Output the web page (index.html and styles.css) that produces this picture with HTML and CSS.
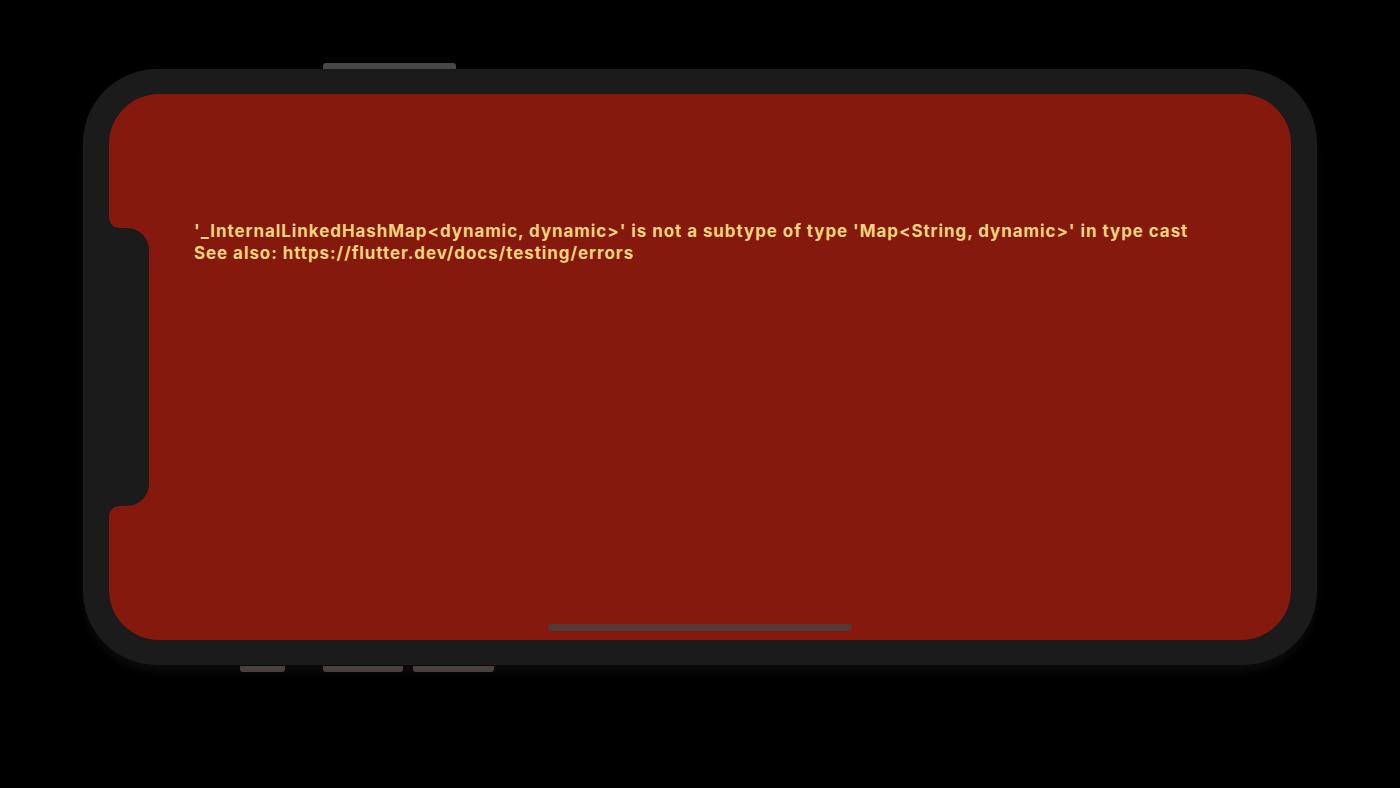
FILE: index.html
```html
<!DOCTYPE html>
<html>
<head>
<meta charset="utf-8">
<link rel="stylesheet" href="styles.css">
</head>
<body>
<div class="stage">
  <div class="phone">
    <span class="btn btn-top"></span>
    <span class="btn btn-b1"></span>
    <span class="btn btn-b2"></span>
    <span class="btn btn-b3"></span>
    <div class="screen">
      <div class="notch"></div>
      <div class="error">
        <p>'_InternalLinkedHashMap&lt;dynamic, dynamic&gt;' is not a subtype of type 'Map&lt;String, dynamic&gt;' in type cast</p>
        <p>See also: https://flutter.dev/docs/testing/errors</p>
      </div>
      <div class="home-indicator"></div>
    </div>
  </div>
</div>
</body>
</html>
```
FILE: styles.css
```css
html, body {
  margin: 0;
  padding: 0;
  background: #000;
  width: 1400px;
  height: 788px;
  overflow: hidden;
}

.stage {
  display: flex;
  justify-content: center;
  padding-top: 69px;
}

.phone {
  position: relative;
  width: 1234px;
  height: 596px;
  box-sizing: border-box;
  padding: 25px 26px 25px 26px;
  background: #1b1b1b;
  border-radius: 74px;
  box-shadow: 0 8px 10px -2px rgba(14, 14, 14, 0.95);
}

.btn {
  position: absolute;
  height: 6px;
  background: #4a4040;
  border-radius: 2px;
}
.btn-top {
  left: 240px;
  top: -6px;
  width: 133px;
  background: #474747;
  border-radius: 3px 3px 0 0;
}
.btn-b1 { left: 157px; bottom: -7px; width: 45px; border-radius: 0 0 3px 3px; }
.btn-b2 { left: 240px; bottom: -7px; width: 80px; border-radius: 0 0 3px 3px; }
.btn-b3 { left: 330px; bottom: -7px; width: 81px; border-radius: 0 0 3px 3px; }

.screen {
  position: relative;
  height: 100%;
  background: #86190e;
  border-radius: 50px;
  box-sizing: border-box;
  padding: 126px 40px 0 85px;
}

.notch {
  position: absolute;
  left: 0;
  top: 134px;
  width: 40px;
  height: 278px;
  background: #1b1b1b;
  border-radius: 0 22px 22px 0;
}
.notch::before,
.notch::after {
  content: "";
  position: absolute;
  left: 0;
  width: 10px;
  height: 10px;
}
.notch::before {
  top: -10px;
  background: radial-gradient(circle at 10px 0, transparent 9.5px, #1b1b1b 10px);
}
.notch::after {
  bottom: -10px;
  background: radial-gradient(circle at 10px 10px, transparent 9.5px, #1b1b1b 10px);
}

.error {
  font-family: Inter, "Liberation Sans", sans-serif;
  font-weight: 700;
  font-size: 17px;
  line-height: 22px;
  color: #f5d47c;
  letter-spacing: 0.92px;
}
.error p {
  margin: 0;
  white-space: nowrap;
}

.home-indicator {
  position: absolute;
  left: 439px;
  bottom: 9px;
  width: 304px;
  height: 7px;
  border-radius: 4px;
  background: #533a37;
}
```
